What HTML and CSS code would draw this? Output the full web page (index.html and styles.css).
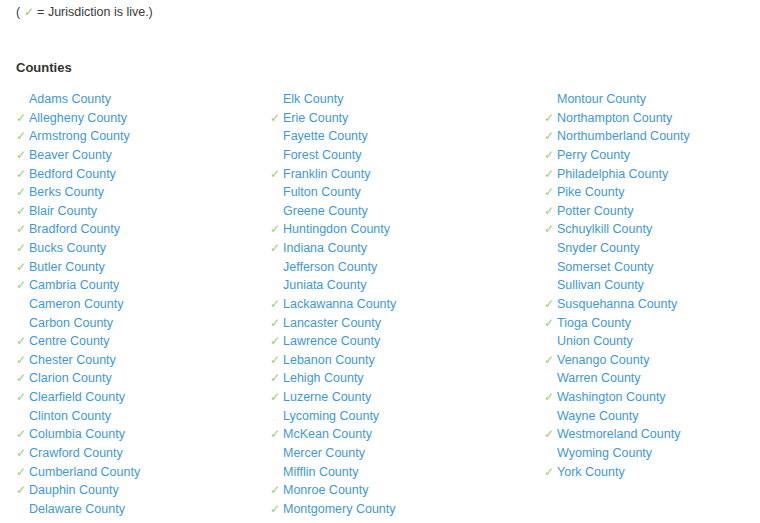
FILE: index.html
```html
<!DOCTYPE html>
<html>
<head>
<meta charset="utf-8">
<link rel="stylesheet" href="styles.css">
</head>
<body>
<div class="page">
  <p class="legend">( <span class="chk">✓</span> = Jurisdiction is live.)</p>
  <h3 class="title">Counties</h3>
  <div class="cols">
    <ul class="col c1">
      <li><a>Adams County</a></li>
      <li class="live"><a>Allegheny County</a></li>
      <li class="live"><a>Armstrong County</a></li>
      <li class="live"><a>Beaver County</a></li>
      <li class="live"><a>Bedford County</a></li>
      <li class="live"><a>Berks County</a></li>
      <li class="live"><a>Blair County</a></li>
      <li class="live"><a>Bradford County</a></li>
      <li class="live"><a>Bucks County</a></li>
      <li class="live"><a>Butler County</a></li>
      <li class="live"><a>Cambria County</a></li>
      <li><a>Cameron County</a></li>
      <li><a>Carbon County</a></li>
      <li class="live"><a>Centre County</a></li>
      <li class="live"><a>Chester County</a></li>
      <li class="live"><a>Clarion County</a></li>
      <li class="live"><a>Clearfield County</a></li>
      <li><a>Clinton County</a></li>
      <li class="live"><a>Columbia County</a></li>
      <li class="live"><a>Crawford County</a></li>
      <li class="live"><a>Cumberland County</a></li>
      <li class="live"><a>Dauphin County</a></li>
      <li><a>Delaware County</a></li>
    </ul>
    <ul class="col c2">
      <li><a>Elk County</a></li>
      <li class="live"><a>Erie County</a></li>
      <li><a>Fayette County</a></li>
      <li><a>Forest County</a></li>
      <li class="live"><a>Franklin County</a></li>
      <li><a>Fulton County</a></li>
      <li><a>Greene County</a></li>
      <li class="live"><a>Huntingdon County</a></li>
      <li class="live"><a>Indiana County</a></li>
      <li><a>Jefferson County</a></li>
      <li><a>Juniata County</a></li>
      <li class="live"><a>Lackawanna County</a></li>
      <li class="live"><a>Lancaster County</a></li>
      <li class="live"><a>Lawrence County</a></li>
      <li class="live"><a>Lebanon County</a></li>
      <li class="live"><a>Lehigh County</a></li>
      <li class="live"><a>Luzerne County</a></li>
      <li><a>Lycoming County</a></li>
      <li class="live"><a>McKean County</a></li>
      <li><a>Mercer County</a></li>
      <li><a>Mifflin County</a></li>
      <li class="live"><a>Monroe County</a></li>
      <li class="live"><a>Montgomery County</a></li>
    </ul>
    <ul class="col c3">
      <li><a>Montour County</a></li>
      <li class="live"><a>Northampton County</a></li>
      <li class="live"><a>Northumberland County</a></li>
      <li class="live"><a>Perry County</a></li>
      <li class="live"><a>Philadelphia County</a></li>
      <li class="live"><a>Pike County</a></li>
      <li class="live"><a>Potter County</a></li>
      <li class="live"><a>Schuylkill County</a></li>
      <li><a>Snyder County</a></li>
      <li><a>Somerset County</a></li>
      <li><a>Sullivan County</a></li>
      <li class="live"><a>Susquehanna County</a></li>
      <li class="live"><a>Tioga County</a></li>
      <li><a>Union County</a></li>
      <li class="live"><a>Venango County</a></li>
      <li><a>Warren County</a></li>
      <li class="live"><a>Washington County</a></li>
      <li><a>Wayne County</a></li>
      <li class="live"><a>Westmoreland County</a></li>
      <li><a>Wyoming County</a></li>
      <li class="live"><a>York County</a></li>
    </ul>
  </div>
</div>
</body>
</html>
```
FILE: styles.css
```css
html, body {
  margin: 0;
  padding: 0;
  background: #fff;
}
.page {
  font-family: "Liberation Sans", Arial, sans-serif;
  font-size: 12.5px;
  color: #3a3a3a;
  padding: 3px 0 0 16px;
}
.legend {
  margin: 0;
  line-height: 18px;
}
.chk {
  color: #9ccf74;
  font-size: 11.5px;
}
.title {
  margin: 38px 0 0 0;
  font-size: 13px;
  font-weight: bold;
  line-height: 18px;
  color: #333;
}
.cols {
  display: grid;
  grid-template-columns: 254px 274px 200px;
  margin-top: 13px;
}
.col {
  list-style: none;
  margin: 0;
  padding: 0 0 0 13px;
}
.col li {
  position: relative;
  line-height: 18.64px;
  height: 18.64px;
}
.col a {
  color: #3d9ad8;
  text-decoration: none;
}
.col li.live::before {
  content: "✓";
  position: absolute;
  left: -13px;
  top: 0;
  color: #9ccf74;
  font-size: 11.5px;
}
```
